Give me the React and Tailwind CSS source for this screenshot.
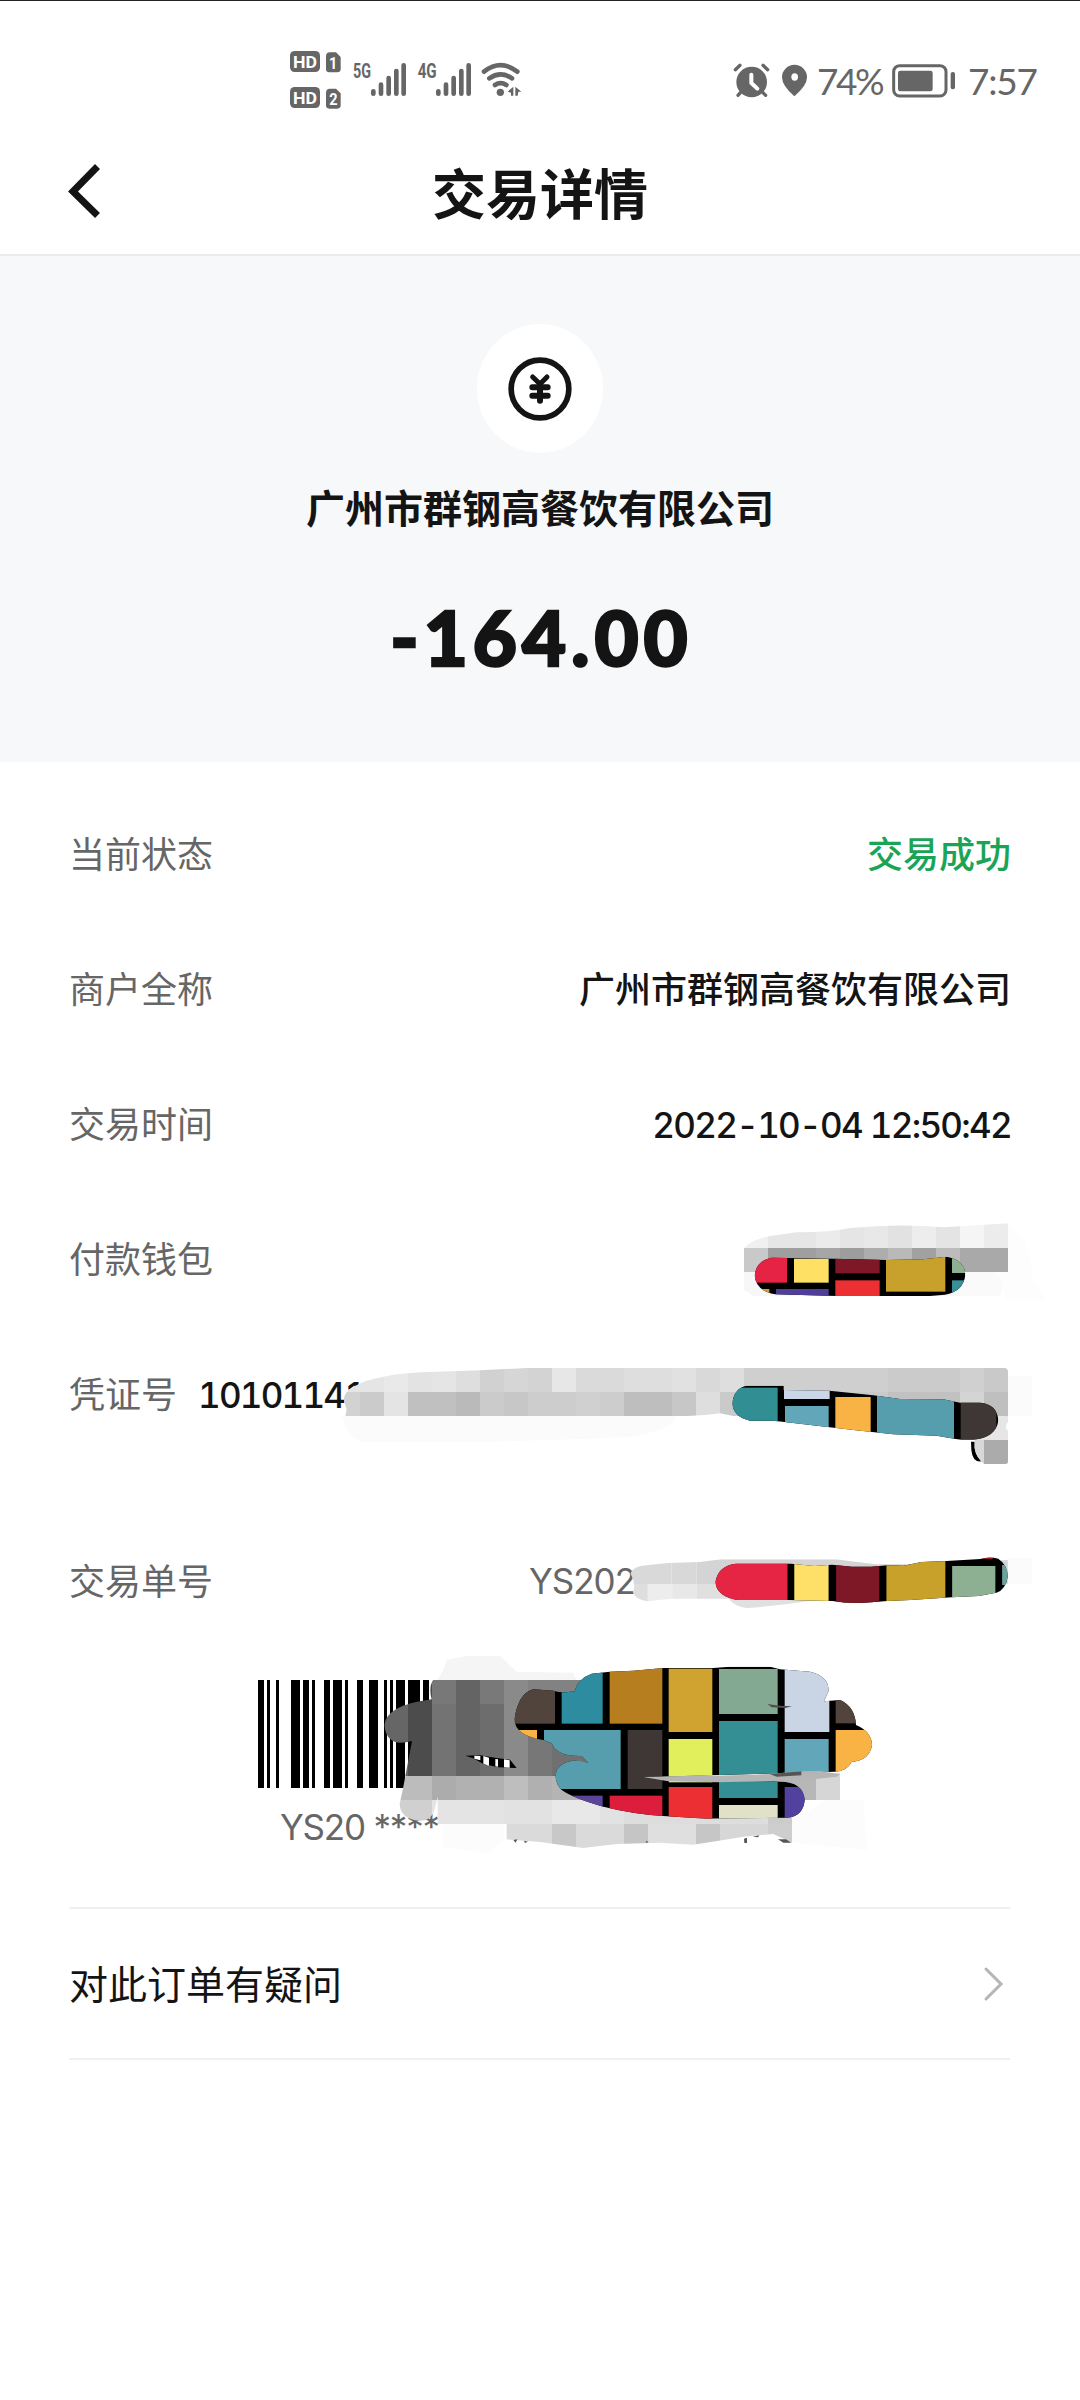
import React from "react";

const rows = [
  { label: "当前状态", value: "交易成功", valueClass: "text-[#1aa456]" },
  { label: "商户全称", value: "广州市群钢高餐饮有限公司", valueClass: "text-[#141414]" },
  { label: "交易时间", value: "2022-10-04 12:50:42", valueClass: "pt-[6px] text-[#141414] font-[Inter] text-[35px] tabular-nums tracking-[-1.7px]" },
];

// [x, width] of every bar, in the barcode's own units
const bars = [
  [54, 18], [81, 9], [108, 9], [153, 27], [189, 18], [216, 9], [252, 18], [279, 27],
  [315, 9], [351, 18], [387, 27], [432, 9], [450, 9], [468, 27], [504, 36], [549, 18],
];

// [x, y, width, height, fill]
function Tiles({ tiles }) {
  return tiles.map(([x, y, w, h, fill], i) => (
    <rect key={i} x={x} y={y} width={w} height={h} fill={fill} />
  ));
}

function NetworkIcons() {
  return (
    <svg width="270" height="100" viewBox="0 0 810 300" fill="#666">
      <rect x="60" y="63" width="90" height="63" rx="14" />
      <rect x="60" y="171" width="90" height="63" rx="14" />
      <path d="M180 67h18l14 14v36q0 10-10 10h-24q-10 0-10-10v-38q0-12 12-12z" />
      <path d="M180 176h18l14 14v36q0 10-10 10h-24q-10 0-10-10v-38q0-12 12-12z" />
      <g fontFamily="Roboto, sans-serif" fontWeight="700">
        <text x="69" y="113" fontSize="52" fill="#fff" textLength="72" lengthAdjust="spacingAndGlyphs">HD</text>
        <text x="69" y="221" fontSize="52" fill="#fff" textLength="72" lengthAdjust="spacingAndGlyphs">HD</text>
        <text x="177" y="116" fontSize="52" fill="#fff" textLength="25" lengthAdjust="spacingAndGlyphs">1</text>
        <text x="178" y="225" fontSize="52" fill="#fff" textLength="25" lengthAdjust="spacingAndGlyphs">2</text>
        <text x="249" y="143" fontSize="61" textLength="54" lengthAdjust="spacingAndGlyphs">5G</text>
        <text x="443" y="143" fontSize="61" textLength="57" lengthAdjust="spacingAndGlyphs">4G</text>
      </g>
      <g stroke="#666" strokeWidth="14" strokeLinecap="round">
        <path d="M310 184v7M333 164v27M356 144v47M379 123v68M401 106v85" />
        <path d="M505 184v7M528 164v27M551 144v47M574 123v68M596 106v85" />
      </g>
      <g fill="none" stroke="#666" strokeWidth="14" strokeLinecap="round">
        <path d="M642 125q50-39 100 0M658 145q34-24 68 0M675 165q17-11 34 0" />
      </g>
      <circle cx="691" cy="187" r="11" />
      <path d="M713 185l17-15v27h-7v-9zM736 170l18 15h-9l-2 12h-7z" />
    </svg>
  );
}

function AlarmAndPin() {
  return (
    <svg width="100" height="40" viewBox="0 0 300 120" fill="#666">
      <circle cx="125" cy="63" r="46" />
      <g stroke="#666" strokeWidth="10" strokeLinecap="round">
        <path d="M76 26l14-13M173 26l-14-13M92 94l-8 9M158 94l9 9" />
      </g>
      <path d="M124 41v25l18 17" fill="none" stroke="#fff" strokeWidth="12" strokeLinecap="round" strokeLinejoin="round" />
      <path d="M253 106q-37-32-37-57a37.500 37.500 0 0 1 75 0q0 25-38 57z" />
      <ellipse cx="254" cy="48" rx="10" ry="11" fill="#fff" />
    </svg>
  );
}

function Battery() {
  return (
    <svg width="64" height="34" viewBox="0 0 192 102">
      <rect x="5" y="5" width="157" height="91" rx="18" fill="none" stroke="#666" strokeWidth="9" />
      <rect x="18" y="20" width="104" height="62" rx="7" fill="#666" />
      <rect x="176" y="24" width="13" height="52" rx="6" fill="#666" />
    </svg>
  );
}

function StatusBar() {
  return (
    <div className="flex h-[129px] items-start border-t border-[#222] text-[37px] leading-[40px] text-[#666]">
      <div className="ml-[270px] mt-[29px]">
        <NetworkIcons />
      </div>
      <div className="ml-[170px] mt-[60px] flex items-center">
        <AlarmAndPin />
        <span className="ml-[7px] w-[75px] whitespace-nowrap font-[Lato] tracking-[-2.4px]">74%</span>
        <Battery />
        <span className="ml-[12px] whitespace-nowrap font-[Lato] tracking-[-1.2px]">7:57</span>
      </div>
    </div>
  );
}

function Header() {
  return (
    <header className="relative flex h-[127px] items-center justify-center border-b-2 border-[#ebebeb]">
      <svg className="absolute left-[66px] top-[34px]" width="38" height="56" viewBox="0 0 38 56">
        <path d="M31.500 3.500L7 28.500L31.500 52.500" fill="none" stroke="#141414" strokeWidth="7" />
      </svg>
      <h1 className="text-[54px] font-bold leading-none text-[#141414]">交易详情</h1>
    </header>
  );
}

function Summary() {
  return (
    <section className="flex h-[506px] flex-col items-center bg-[#f7f8fa] pt-[68px] text-[#141414]">
      <div className="flex h-[129px] w-[126px] items-center justify-center rounded-[50%] bg-white">
        <svg width="64" height="64" viewBox="0 0 192 192" fill="none" stroke="#141414" strokeLinecap="round">
          <circle cx="96" cy="96" r="86.500" strokeWidth="17" />
          <path d="M74 60l22 21l21-21" strokeWidth="15" />
          <path d="M73 91h46M73 116h46M96 84v47" strokeWidth="18" />
        </svg>
      </div>
      <p className="mt-[30px] text-[39px] font-bold leading-[46px]">广州市群钢高餐饮有限公司</p>
      <p className="mt-[68px] pl-[3px] font-[Lato] text-[76px] font-black leading-[80px] tracking-[5.1px] [-webkit-text-stroke:2.5px_#141414]">-164.00</p>
    </section>
  );
}

function WalletMask() {
  return (
    <svg className="absolute left-[700px] top-[9px]" width="360" height="120" viewBox="0 0 1080 360">
      <defs>
        <clipPath id="wallet-smear">
          <path d="M132 145Q150 120 210 108L290 97Q380 98 450 84Q600 70 730 82Q830 76 924 70V216H780V288H160L132 270z" />
        </clipPath>
        <clipPath id="wallet-brush">
          <path d="M215 173L400 176L560 180L670 178L740 170Q795 180 796 225Q790 275 735 284L690 288H410L225 283Q168 272 164 227Q168 182 215 173z" />
        </clipPath>
      </defs>
      <path d="M924 72Q960 90 980 140Q1005 200 996 240L1040 300H920L895 225z" fill="#fdfdfd" />
      <g clipPath="url(#wallet-smear)">
        <Tiles
          tiles={[
            [132, 60, 72, 84, "#f0f0f0"], [204, 60, 144, 84, "#e6e6e6"], [348, 60, 72, 84, "#ebebeb"],
            [420, 60, 72, 84, "#e5e5e5"], [492, 60, 72, 84, "#e8e8e8"], [564, 60, 72, 84, "#e2e2e2"],
            [636, 60, 72, 84, "#ededed"], [708, 60, 72, 84, "#e4e4e4"], [780, 60, 72, 84, "#f5f5f5"],
            [852, 60, 72, 84, "#ececec"], [132, 144, 72, 72, "#c9c9c9"], [204, 144, 144, 72, "#9f9f9f"],
            [348, 144, 72, 72, "#a6a6a6"], [420, 144, 72, 72, "#9d9d9d"], [492, 144, 72, 72, "#adadad"],
            [564, 144, 72, 72, "#b9b9b9"], [636, 144, 72, 72, "#a1a1a1"], [708, 144, 72, 72, "#bcbcbc"],
            [780, 144, 144, 72, "#a9a9a9"], [132, 216, 780, 72, "#f7f7f7"],
          ]}
        />
      </g>
      <path d="M780 216H885L912 250L900 288H780z" fill="#fafafa" />
      <g clipPath="url(#wallet-brush)">
        <rect x="160" y="165" width="640" height="130" fill="#000" />
        <Tiles
          tiles={[
            [160, 165, 101, 83, "#e62345"], [282, 176, 104, 72, "#fee065"], [406, 170, 133, 50, "#7e1726"],
            [160, 267, 48, 20, "#d0a02e"], [228, 267, 158, 30, "#4f3f99"], [406, 241, 133, 60, "#ec2f32"],
            [558, 165, 178, 110, "#c7a12c"], [756, 165, 50, 54, "#8db092"], [756, 241, 50, 54, "#379096"],
          ]}
        />
      </g>
    </svg>
  );
}

function VoucherMask() {
  return (
    <svg className="absolute left-[320px] top-[14px]" width="730" height="140" viewBox="0 0 2190 420">
      <defs>
        <clipPath id="voucher-smear">
          <path d="M76 228L80 210L72 180Q70 158 100 140Q140 118 190 110Q250 98 330 96L480 91L620 84H2052Q2064 84 2064 96V228H1240L1200 220Q1150 228 1100 228z" />
        </clipPath>
        <clipPath id="voucher-brush">
          <path d="M1280 137H1391V150L1528 152L1660 166L1740 177L1870 178L1920 188H1980Q2032 192 2035 242Q2028 292 1960 299H1920L1850 287L1720 283L1600 270L1400 247L1360 242H1290Q1240 232 1237 190Q1242 144 1280 137z" />
        </clipPath>
      </defs>
      <path d="M66 228H1070Q1040 290 850 295L480 306H140Q80 300 66 228z" fill="#fbfbfb" />
      <rect x="2064" y="108" width="72" height="120" fill="#fbfbfb" />
      <g clipPath="url(#voucher-smear)">
        <Tiles
          tiles={[
            [60, 80, 132, 76, "#e5e5e5"], [192, 80, 72, 76, "#e9e9e9"], [264, 80, 72, 76, "#e3e3e3"],
            [336, 80, 72, 76, "#e5e5e5"], [408, 80, 72, 76, "#dedede"], [480, 80, 72, 76, "#d1d1d1"],
            [552, 80, 72, 76, "#d6d6d6"], [624, 80, 72, 76, "#d3d3d3"], [696, 80, 72, 76, "#e7e7e7"],
            [768, 80, 144, 76, "#dadada"], [912, 80, 144, 76, "#dedede"], [1056, 80, 72, 76, "#e1e1e1"],
            [1128, 80, 72, 76, "#d9d9d9"], [1200, 80, 72, 76, "#dedede"], [1272, 80, 432, 76, "#cfcfcf"],
            [1704, 80, 216, 76, "#cbcbcb"], [1920, 80, 72, 76, "#d0d0d0"], [1992, 80, 72, 76, "#c9c9c9"],
            [60, 156, 60, 72, "#d2d2d2"], [120, 156, 72, 72, "#cbcbcb"], [192, 156, 72, 72, "#e4e4e4"],
            [264, 156, 144, 72, "#c0c0c0"], [408, 156, 72, 72, "#bababa"], [480, 156, 72, 72, "#cbcbcb"],
            [552, 156, 72, 72, "#c7c7c7"], [624, 156, 144, 72, "#cdcdcd"], [768, 156, 72, 72, "#d0d0d0"],
            [840, 156, 72, 72, "#cdcdcd"], [912, 156, 144, 72, "#bebebe"], [1056, 156, 72, 72, "#c7c7c7"],
            [1128, 156, 72, 72, "#dedede"], [1200, 156, 504, 72, "#cacaca"], [1704, 156, 216, 72, "#c1c1c1"],
            [1920, 156, 72, 72, "#d4d4d4"], [1992, 156, 72, 72, "#bfbfbf"],
          ]}
        />
      </g>
      <path d="M1976 228H2064V246Q2050 260 2064 272V300H1962z" fill="#e6e6e6" />
      <path d="M1953 305H1964Q1960 340 1984 364Q1958 368 1954 330z" fill="#000" />
      <path d="M1964 300H1992V372Q1970 355 1964 325z" fill="#d8d8d8" />
      <path d="M1992 300H2064V366Q2064 372 2056 372H1992z" fill="#ababab" />
      <g clipPath="url(#voucher-brush)">
        <rect x="1230" y="130" width="810" height="180" fill="#000" />
        <Tiles
          tiles={[
            [1230, 143, 143, 110, "#318f94"], [1392, 140, 137, 37, "#c8d6e8"], [1395, 198, 131, 70, "#62a6b9"],
            [1546, 171, 106, 115, "#f9b345"], [1671, 165, 231, 140, "#569eae"], [1922, 180, 107, 130, "#3e3735"],
          ]}
        />
      </g>
    </svg>
  );
}

function OrderMask() {
  return (
    <svg className="absolute left-[500px] top-[17px]" width="560" height="100" viewBox="0 0 1568 300" preserveAspectRatio="none">
      <defs>
        <clipPath id="order-smear">
          <path d="M365 130Q375 108 410 106L470 99L560 96L620 88H940L1050 103H1200L1422 90V162L1200 200L860 214Q780 228 690 234Q655 228 640 206L480 206L412 214Q375 205 372 185Q382 165 365 130z" />
        </clipPath>
        <clipPath id="order-brush">
          <path d="M660 101H815L880 108L930 104L985 110H1040L1085 106L1130 107L1180 96L1250 93L1345 87Q1370 78 1395 86Q1422 105 1422 140Q1415 180 1390 188L1340 198L1265 202L1150 210L1085 213L1040 217Q980 222 930 213L810 210H665Q607 200 603 157Q610 108 660 101z" />
        </clipPath>
      </defs>
      <rect x="1420" y="85" width="70" height="77" fill="#fbfbfb" />
      <g clipPath="url(#order-smear)">
        <Tiles
          tiles={[
            [360, 80, 120, 82, "#d9d9d9"], [480, 80, 70, 82, "#d8d8d8"], [550, 80, 880, 82, "#d4d4d4"],
            [360, 162, 54, 72, "#dedede"], [414, 162, 68, 72, "#ededed"], [482, 162, 68, 72, "#e8e8e8"],
            [550, 162, 400, 80, "#e0e0e0"],
          ]}
        />
      </g>
      <g clipPath="url(#order-brush)">
        <rect x="600" y="78" width="825" height="150" fill="#000" />
        <Tiles
          tiles={[
            [600, 100, 205, 120, "#e62443"], [824, 100, 96, 120, "#fee068"], [941, 100, 121, 130, "#7e1726"],
            [1082, 90, 165, 130, "#c8a12b"], [1266, 108, 121, 100, "#8db092"], [1406, 105, 20, 60, "#6aa39b"],
          ]}
        />
        <path d="M1340 80H1385L1378 88L1350 86z" fill="#a21c2c" />
      </g>
    </svg>
  );
}

function BarcodeMask() {
  return (
    <svg className="absolute left-0 top-[-40px]" width="660" height="220" viewBox="0 0 1980 660">
      <defs>
        <clipPath id="code-smear">
          <path d="M580 120H1250V400H1800V480H1656V608L1600 582L1510 590L1450 600L1360 614L1260 608L1130 612L1030 624L900 606L800 598V552H593V470L585 505Q575 545 535 542Q480 535 479 492L490 440L516 303Q440 325 433 255Q440 195 575 178Q565 140 580 120z" />
        </clipPath>
        <clipPath id="code-brush">
          <path d="M880 148L940 152Q965 160 990 155L1003 155Q1015 115 1055 101L1110 95L1180 92L1270 84H1420L1470 80H1590L1620 88L1710 95Q1770 110 1765 155L1752 184L1800 180Q1845 200 1848 255Q1895 275 1896 315Q1890 360 1835 366Q1820 394 1785 395L1620 400L1200 412L1620 425Q1690 425 1694 480Q1690 530 1640 533L1400 536L1270 528Q1180 522 1090 500Q1000 475 965 450Q940 425 950 390Q970 360 1020 360L1045 368L1025 348Q950 350 935 310L910 300Q820 285 824 235Q835 160 880 148z" />
        </clipPath>
      </defs>
      <path d="M592 120Q610 95 620 60L680 48H780L830 95L1000 98L1010 120z" fill="#f5f5f5" />
      <path d="M610 552H792V600L740 640L610 620zM1656 540L1760 480H1870L1880 630L1656 608z" fill="#fcfcfc" />
      <g clipPath="url(#code-smear)">
        <Tiles
          tiles={[
            [430, 110, 74, 298, "#666"], [504, 110, 72, 298, "#4c4c4c"], [576, 110, 72, 298, "#737373"],
            [648, 110, 72, 298, "#646464"], [720, 110, 72, 298, "#6d6d6d"], [792, 110, 72, 298, "#8a8a8a"],
            [864, 110, 72, 298, "#777"], [936, 110, 400, 298, "#707070"], [576, 110, 72, 82, "#787878"],
            [720, 110, 72, 82, "#797979"], [864, 110, 200, 82, "#828282"],
            [430, 408, 146, 72, "#bcbcbc"], [576, 408, 72, 72, "#acacac"], [648, 408, 144, 72, "#b1b1b1"],
            [792, 408, 72, 72, "#bebebe"], [864, 408, 72, 72, "#b0b0b0"], [936, 408, 720, 72, "#b4b4b4"],
            [1656, 395, 72, 85, "#b7b7b7"], [1728, 395, 72, 85, "#d6d6d6"],
            [430, 480, 146, 72, "#d0d0d0"], [576, 480, 216, 72, "#e4e4e4"], [792, 480, 144, 72, "#e2e2e2"],
            [936, 480, 144, 72, "#e8e8e8"], [1080, 480, 72, 72, "#e2e2e2"], [1152, 480, 432, 72, "#ddd"],
            [1584, 480, 72, 72, "#ccc"],
            [792, 552, 144, 75, "#dadada"], [936, 552, 72, 75, "#c8c8c8"], [1008, 552, 144, 75, "#dadada"],
            [1152, 552, 72, 75, "#c5c5c5"], [1224, 552, 144, 75, "#dfdfdf"], [1368, 552, 72, 75, "#c6c6c6"],
            [1440, 552, 144, 75, "#d7d7d7"], [1584, 552, 72, 75, "#cecece"],
          ]}
        />
      </g>
      <path d="M676 347L720 346L770 354L810 359L830 384L775 382L730 372L700 355z" fill="#000" />
      <path d="M703 347l18 1v13l-18-5zM730 348l17 5v24l-17-6zM766 357l8 1v22l-8-1zM792 358l17 3v22l-17-1z" fill="#fff" />
      <path d="M820 600l12 -2l-5 10zM852 602l12 3l-9 4zM1217 603l9 2l-7 4zM1512 596l9-3v16h-8zM1538 590l20-4l-4 6zM1614 598l24 0l16 10l-24 0z" fill="#555" />
      <g clipPath="url(#code-brush)">
        <rect x="820" y="76" width="1080" height="464" fill="#000" />
        <Tiles
          tiles={[
            [820, 140, 125, 111, "#51443c"], [965, 90, 123, 161, "#2d8ca0"], [1109, 80, 158, 171, "#b77e20"],
            [820, 270, 71, 30, "#f9b345"], [912, 270, 230, 177, "#569eae"], [1163, 270, 104, 177, "#3e3735"],
            [1286, 86, 131, 190, "#d0a22f"], [1286, 297, 131, 130, "#e1ef5c"], [1437, 87, 176, 135, "#84a992"],
            [1437, 243, 176, 231, "#338f94"], [1634, 86, 134, 190, "#c9d4e5"], [1634, 297, 132, 110, "#62a6b9"],
            [1787, 170, 70, 80, "#51443c"], [1787, 270, 110, 130, "#f9b345"], [960, 467, 128, 40, "#5a4599"],
            [1109, 467, 158, 75, "#dc1e3c"], [1286, 441, 131, 100, "#ec2f32"], [1437, 495, 176, 45, "#e1e1c8"],
            [1634, 441, 70, 100, "#5341a0"],
          ]}
        />
      </g>
      <path d="M1210 411L1380 408L1510 405L1590 402L1680 394L1740 393L1800 403L1790 410L1720 418L1600 423L1430 427L1280 423z" fill="#b5b5b5" />
      <path d="M1590 402L1684 394L1684 406L1610 410z" fill="#555" />
      <path d="M970 347L1018 347L1046 370L1005 359L970 364z" fill="#707070" />
      <path d="M1582 192L1620 197L1656 199L1635 204L1595 202z" fill="#4c514e" />
    </svg>
  );
}

function Row({ label, children }) {
  return (
    <div className="relative flex h-[135px] items-center justify-between px-[69px] pb-[3px] text-[36px]">
      <span className="text-[#666]">{label}</span>
      {children}
    </div>
  );
}

export default function App() {
  return (
    <div className="h-[2400px] w-[1080px] overflow-hidden bg-white font-['Noto_Sans_CJK_SC',sans-serif]">
      <StatusBar />
      <Header />
      <Summary />

      <main className="pt-[24px]">
        {rows.map((row) => (
          <Row key={row.label} label={row.label}>
            <span className={`font-medium ${row.valueClass}`}>{row.value}</span>
          </Row>
        ))}

        <Row label="付款钱包">
          <WalletMask />
        </Row>

        <div className="relative flex h-[135px] items-center px-[69px] pb-[3px] text-[36px]">
          <span className="text-[#666]">凭证号</span>
          <span className="ml-[21px] pt-[6px] font-[Inter] text-[35px] font-medium tabular-nums tracking-[-1.8px] text-[#141414]">10101141</span>
          <VoucherMask />
        </div>

        <div className="relative mt-[52px] flex h-[135px] items-center px-[69px] pb-[4px] text-[36px] text-[#666]">
          <span>交易单号</span>
          <span className="ml-[316px] pt-[5px] font-[Inter] text-[35px] tracking-[-1px]">YS202</span>
          <OrderMask />
        </div>

        <div className="relative ml-[240px] mt-[32px] h-[227px] w-[660px]">
          <svg width="280" height="108" viewBox="0 120 840 324" preserveAspectRatio="none">
            {bars.map(([x, w]) => (
              <rect key={x} x={x} y="120" width={w} height="324" fill="#000" />
            ))}
          </svg>
          <p className="ml-[40px] mt-[19px] font-[Inter] text-[35px] leading-[40px] tracking-[-1.2px] text-[#666]">YS20 ****</p>
          <BarcodeMask />
        </div>

        <div className="ml-[69px] mr-[70px] flex h-[153px] items-center justify-between border-y-2 border-[#f0f0f0] pr-[5px] text-[39px] text-[#141414]">
          <span className="pb-[2px]">对此订单有疑问</span>
          <svg width="22" height="36" viewBox="0 0 22 36">
            <path d="M3 3L18 18L3 33" fill="none" stroke="#b5b5b5" strokeWidth="3" strokeLinecap="round" />
          </svg>
        </div>
      </main>
    </div>
  );
}
